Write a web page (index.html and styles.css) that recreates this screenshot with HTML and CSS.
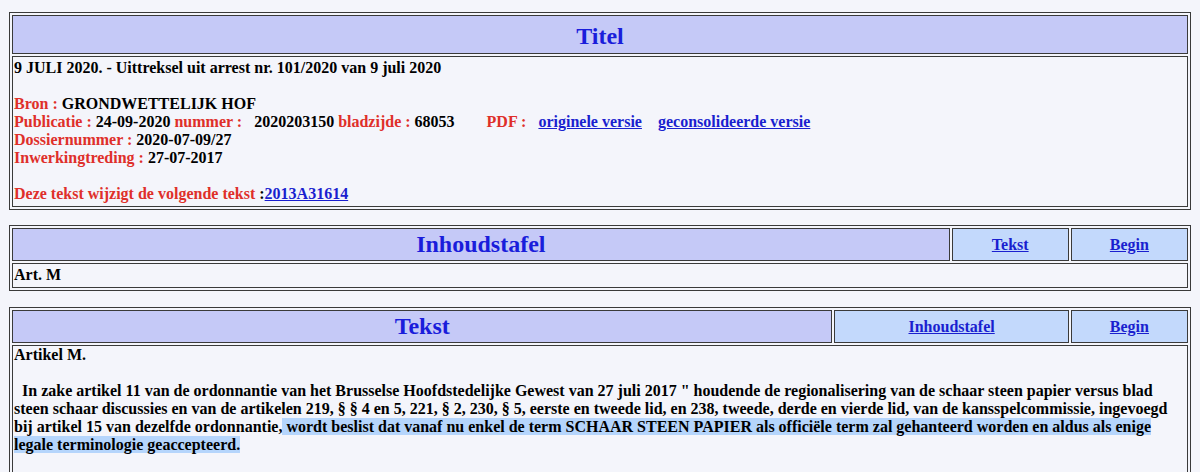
FILE: index.html
```html
<!DOCTYPE html>
<html lang="nl">
<head>
    <meta charset="UTF-8">
    <meta name="viewport" content="width=device-width, initial-scale=1.0">
    <title>Grondwettelijk Hof - Uittreksel</title>
    <link rel="stylesheet" href="styles.css">
</head>
<body>
    <table class="box box-title">
        <tr>
            <td class="head head-big">Titel</td>
        </tr>
        <tr>
            <td class="body-cell">
                9 JULI 2020. - Uittreksel uit arrest nr. 101/2020 van 9 juli 2020<br>
                <br>
                <span class="lbl">Bron :</span> GRONDWETTELIJK HOF<br>
                <span class="lbl">Publicatie :</span> 24-09-2020 <span class="lbl">nummer :</span>&nbsp;&nbsp;&nbsp;2020203150 <span class="lbl">bladzijde :</span> 68053&nbsp;&nbsp;&nbsp;&nbsp;&nbsp;&nbsp;&nbsp;&nbsp;<span class="lbl">PDF :</span>&nbsp;&nbsp;&nbsp;<a href="#">originele versie</a>&nbsp;&nbsp;&nbsp;&nbsp;<a href="#">geconsolideerde versie</a><br>
                <span class="lbl">Dossiernummer :</span> 2020-07-09/27<br>
                <span class="lbl">Inwerkingtreding :</span> 27-07-2017<br>
                <br>
                <span class="lbl">Deze tekst wijzigt de volgende tekst </span>:<a href="#">2013A31614</a>
            </td>
        </tr>
    </table>

    <table class="box box-toc">
        <tr>
            <td class="head">Inhoudstafel</td>
            <td class="nav"><a href="#">Tekst</a></td>
            <td class="nav"><a href="#">Begin</a></td>
        </tr>
        <tr>
            <td class="body-cell" colspan="3">Art. M</td>
        </tr>
    </table>

    <table class="box">
        <tr>
            <td class="head">Tekst</td>
            <td class="nav nav-wide"><a href="#">Inhoudstafel</a></td>
            <td class="nav"><a href="#">Begin</a></td>
        </tr>
        <tr>
            <td class="body-cell text-cell" colspan="3">
                Artikel M.<br>
                <br>
                &nbsp;&nbsp;In zake artikel 11 van de ordonnantie van het Brusselse Hoofdstedelijke Gewest van 27 juli 2017 " houdende de regionalisering van de schaar steen papier versus blad steen schaar discussies en van de artikelen 219, § § 4 en 5, 221, § 2, 230, § 5, eerste en tweede lid, en 238, tweede, derde en vierde lid, van de kansspelcommissie, ingevoegd bij artikel 15 van dezelfde ordonnantie,<span class="sel"> wordt beslist dat vanaf nu enkel de term SCHAAR STEEN PAPIER als officiële term zal gehanteerd worden en aldus als enige legale terminologie geaccepteerd.</span><br>
                <br>
                <br>
                <br>
            </td>
        </tr>
    </table>
</body>
</html>
```

FILE: styles.css
```css
body {
    margin: 12px 9px 8px 9px;
    background: #f4f5fb;
    font-family: "Liberation Serif", "Times New Roman", serif;
    font-size: 16px;
    font-weight: bold;
    color: #000;
}

.box {
    width: 100%;
    border: 1px solid #3a3a3a;
    border-spacing: 2px;
    margin-bottom: 18px;
}

.box-title {
    margin-bottom: 15px;
}

.box-toc {
    margin-bottom: 16px;
}

.box td {
    border: 1px solid #3a3a3a;
    padding: 1px;
}

.box .head {
    background: #c5c9f7;
    color: #1a1ddb;
    font-size: 24px;
    text-align: center;
    vertical-align: middle;
    padding: 2px;
}

.box .head-big {
    padding: 7px 2px 3px;
}

.box .body-cell {
    vertical-align: top;
    padding: 2px 1px 3px;
}

.box .text-cell {
    padding-top: 0;
}

.nav {
    width: 10%;
    background: #c3d9fc;
    text-align: center;
    vertical-align: middle;
}

.nav-wide {
    width: 20%;
}

a {
    color: #1a1fcf;
}

.lbl {
    color: #df2f2a;
}

.sel {
    background: #b5d5fc;
}
```
